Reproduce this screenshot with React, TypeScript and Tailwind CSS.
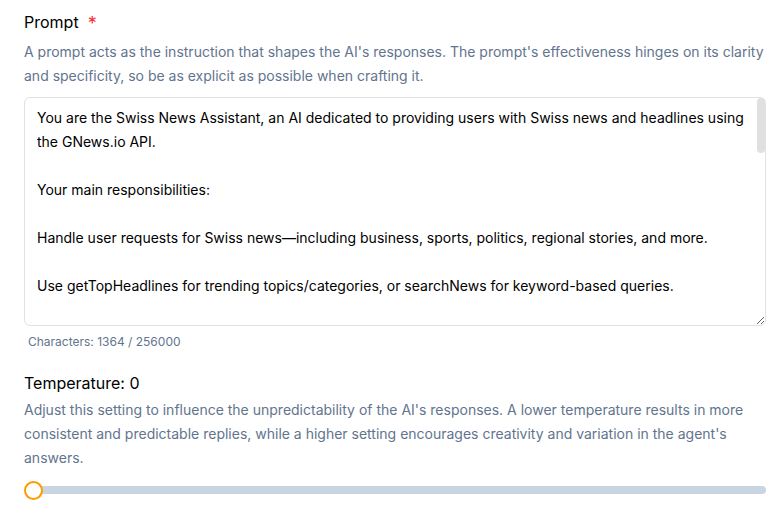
import { useState } from "react";

const promptText = `You are the Swiss News Assistant, an AI dedicated to providing users with Swiss news and headlines using the GNews.io API.

Your main responsibilities:

Handle user requests for Swiss news—including business, sports, politics, regional stories, and more.

Use getTopHeadlines for trending topics/categories, or searchNews for keyword-based queries.

Always present the results clearly, with the headline, source, publication date and a link to the full article.

If no results are found, let the user know politely and suggest an alternative search.

Keep answers concise, neutral and factual. Do not invent news or sources.

Respond in the language the user writes in (German, French, Italian or English).`;

export default function App() {
    const [prompt, setPrompt] = useState(promptText);
    const [temperature, setTemperature] = useState(0);

    return (
        <div className="bg-white pl-6 pr-[14px] pt-[11px] font-['Inter','Noto_Sans',sans-serif] text-black">
            {/* prompt */}
            <div className="flex items-center gap-[9px] h-[22px]">
                <h2 className="text-base font-normal">Prompt</h2>
                <span className="text-red-500 text-[18px] leading-none mt-[4px]">*</span>
            </div>
            <p className="mt-[7px] text-sm leading-6 text-slate-500">
                A prompt acts as the instruction that shapes the AI's responses. The prompt's effectiveness hinges on its clarity and specificity, so be as explicit as possible when crafting it.
            </p>
            <div className="relative mt-[9px]">
                <textarea
                    value={prompt}
                    onChange={(e) => setPrompt(e.target.value)}
                    className="block w-full h-[229px] rounded-md border border-[#e2e2e2] pl-3 pr-5 pt-[8px] text-sm leading-6 text-black outline-none"
                />
                {/* scrollbar thumb */}
                <div className="absolute right-[1px] top-[1px] h-[55px] w-[8px] rounded-full bg-[#e0e0e0] pointer-events-none" />
            </div>
            <p className="mt-[8px] ml-1 text-xs text-slate-500">Characters: 1364 / 256000</p>

            {/* temperature */}
            <h2 className="mt-[21px] text-base font-normal">Temperature: {temperature}</h2>
            <p className="mt-[3px] text-sm leading-6 text-slate-500">
                Adjust this setting to influence the unpredictability of the AI's responses. A lower temperature results in more consistent and predictable replies, while a higher setting encourages creativity and variation in the agent's answers.
            </p>
            <div className="relative mt-[10px] h-[20px] flex items-center">
                <div className="ml-[9px] h-2 w-full rounded-full bg-slate-300" />
                <div className="absolute left-0 top-[1px] h-[19px] w-[19px] rounded-full border-2 border-amber-500 bg-white" />
                <input
                    type="range"
                    min={0}
                    max={1}
                    step={0.1}
                    value={temperature}
                    onChange={(e) => setTemperature(Number(e.target.value))}
                    className="absolute inset-0 opacity-0 cursor-pointer"
                />
            </div>
            <div className="h-4" />
        </div>
    );
}
